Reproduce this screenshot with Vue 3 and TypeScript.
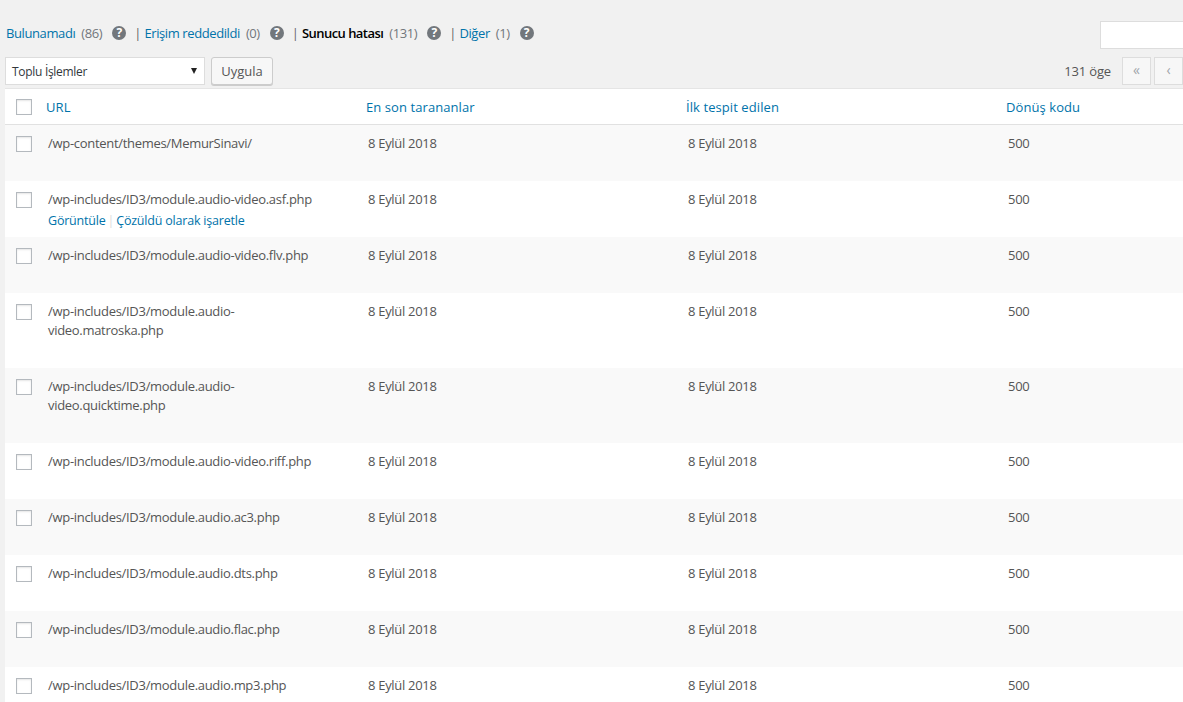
<template>
  <div class="page">
    <div class="top">
      <ul class="subsubsub">
        <li v-for="(f, i) in filters" :key="f.name">
          <span v-if="i > 0" class="pipe">|</span>
          <span :class="f.current ? 'current' : 'link'">{{ f.name }}</span>
          <span class="count">({{ f.count }})</span>
          <span class="help">?</span>
        </li>
      </ul>
      <input class="search" type="text" />
    </div>
    <div class="nav">
      <div class="select">
        <span>Toplu İşlemler</span>
        <i class="caret"></i>
      </div>
      <button class="apply">Uygula</button>
      <div class="pages">
        <span class="num">131 öge</span>
        <span class="pg">«</span>
        <span class="pg">‹</span>
      </div>
    </div>
    <div class="table">
      <div class="row head">
        <div class="cb"><span class="box"></span></div>
        <div>URL</div>
        <div>En son tarananlar</div>
        <div>İlk tespit edilen</div>
        <div>Dönüş kodu</div>
      </div>
      <div v-for="(r, i) in rows" :key="r.url" class="row" :class="{ alt: i % 2 == 0, tall: r.url.includes('\n') }">
        <div class="cb"><span class="box"></span></div>
        <div class="url">
          <div class="path">{{ r.url }}</div>
          <div v-if="r.actions" class="actions">
            <span>Görüntüle</span><em>|</em><span>Çözüldü olarak işaretle</span>
          </div>
        </div>
        <div>8 Eylül 2018</div>
        <div>8 Eylül 2018</div>
        <div>500</div>
      </div>
    </div>
  </div>
</template>

<script setup lang="ts">
const filters = [
  { name: "Bulunamadı", count: 86 },
  { name: "Erişim reddedildi", count: 0 },
  { name: "Sunucu hatası", count: 131, current: true },
  { name: "Diğer", count: 1 }
];

const rows = [
  { url: "/wp-content/themes/MemurSinavi/" },
  { url: "/wp-includes/ID3/module.audio-video.asf.php", actions: true },
  { url: "/wp-includes/ID3/module.audio-video.flv.php" },
  { url: "/wp-includes/ID3/module.audio-\nvideo.matroska.php" },
  { url: "/wp-includes/ID3/module.audio-\nvideo.quicktime.php" },
  { url: "/wp-includes/ID3/module.audio-video.riff.php" },
  { url: "/wp-includes/ID3/module.audio.ac3.php" },
  { url: "/wp-includes/ID3/module.audio.dts.php" },
  { url: "/wp-includes/ID3/module.audio.flac.php" },
  { url: "/wp-includes/ID3/module.audio.mp3.php" }
];
</script>

<style>
html,
body {
  margin: 0;
  background: #f1f1f1;
  overflow: hidden;
}
</style>

<style scoped>
.page {
  width: 1183px;
  height: 702px;
  overflow: hidden;
  font-family: "Open Sans", sans-serif;
  font-size: 13px;
  color: #555;
  background: #f1f1f1;
}
.top {
  display: flex;
  justify-content: space-between;
  height: 57px;
  padding-top: 21px;
  box-sizing: border-box;
}
.subsubsub {
  display: flex;
  margin: 0;
  padding: 2px 0 0 6px;
  list-style: none;
  line-height: 20px;
}
.subsubsub li {
  display: flex;
  align-items: center;
  height: 20px;
  white-space: nowrap;
}
.link {
  color: #0073aa;
  letter-spacing: -0.4px;
}
.current {
  color: #000;
  font-weight: 600;
  letter-spacing: -0.55px;
}
.count {
  margin-left: 6px;
  color: #72777c;
  letter-spacing: -0.4px;
}
.pipe {
  margin: 0 3px 0 8px;
  color: #666;
}
.help {
  width: 14px;
  height: 14px;
  margin-left: 10px;
  border-radius: 50%;
  background: #72777c;
  color: #fff;
  font-size: 12px;
  font-weight: 700;
  line-height: 14px;
  text-align: center;
}
.search {
  width: 90px;
  height: 28px;
  margin: 0 -7px 0 0;
  padding: 0;
  box-sizing: border-box;
  border: 1px solid #ddd;
  background: #fff;
  outline: none;
}
.nav {
  display: flex;
  align-items: flex-start;
  height: 31px;
  padding-left: 5px;
}
.select {
  display: flex;
  align-items: center;
  justify-content: space-between;
  box-sizing: border-box;
  width: 200px;
  height: 28px;
  padding: 0 7px 0 6px;
  border: 1px solid #ddd;
  background: #fff;
  color: #32373c;
  font-size: 12px;
  letter-spacing: -0.3px;
}
.caret {
  border-left: 3.5px solid transparent;
  border-right: 3.5px solid transparent;
  border-top: 6px solid #222;
}
.apply {
  height: 28px;
  width: 62px;
  margin-left: 6px;
  padding: 0;
  border: 1px solid #ccc;
  border-radius: 3px;
  background: #f7f7f7;
  box-shadow: 0 1px 0 #ccc;
  color: #555;
  font: inherit;
}
.pages {
  display: flex;
  align-items: center;
  gap: 3px;
  margin-left: auto;
}
.num {
  margin-right: 8px;
  letter-spacing: -0.15px;
}
.pg {
  box-sizing: border-box;
  width: 29px;
  height: 28px;
  border: 1px solid #ddd;
  background: #f7f7f7;
  color: #a0a5aa;
  font-size: 14px;
  line-height: 24px;
  text-align: center;
}
.table {
  margin-left: 5px;
  border-top: 1px solid #e5e5e5;
  background: #fff;
  margin-top: 0;
}
.row {
  display: grid;
  grid-template-columns: 43px 320px 320px 320px 1fr;
  height: 56px;
  padding-top: 9px;
  box-sizing: border-box;
  line-height: 19px;
  letter-spacing: -0.3px;
}
.row.tall {
  height: 75px;
}
.alt {
  background: #f9f9f9;
}
.head {
  height: 36px;
  padding-top: 9px;
  border-bottom: 1px solid #e1e1e1;
  color: #0073aa;
  letter-spacing: 0.08px;
  grid-template-columns: 41px 320px 320px 320px 1fr;
}
.head .cb {
  padding-top: 1px;
}
.cb {
  padding-left: 11px;
  padding-top: 2px;
}
.box {
  display: block;
  box-sizing: border-box;
  width: 16px;
  height: 16px;
  border: 1px solid #b4b9be;
  background: #fff;
  box-shadow: inset 0 1px 2px rgba(0, 0, 0, 0.1);
}
.path {
  white-space: pre-line;
}
.actions {
  margin-top: 2px;
  color: #0073aa;
  font-size: 12.5px;
  letter-spacing: -0.2px;
}
.actions em {
  margin: 0 2px;
  color: #ddd;
  font-style: normal;
}
</style>
